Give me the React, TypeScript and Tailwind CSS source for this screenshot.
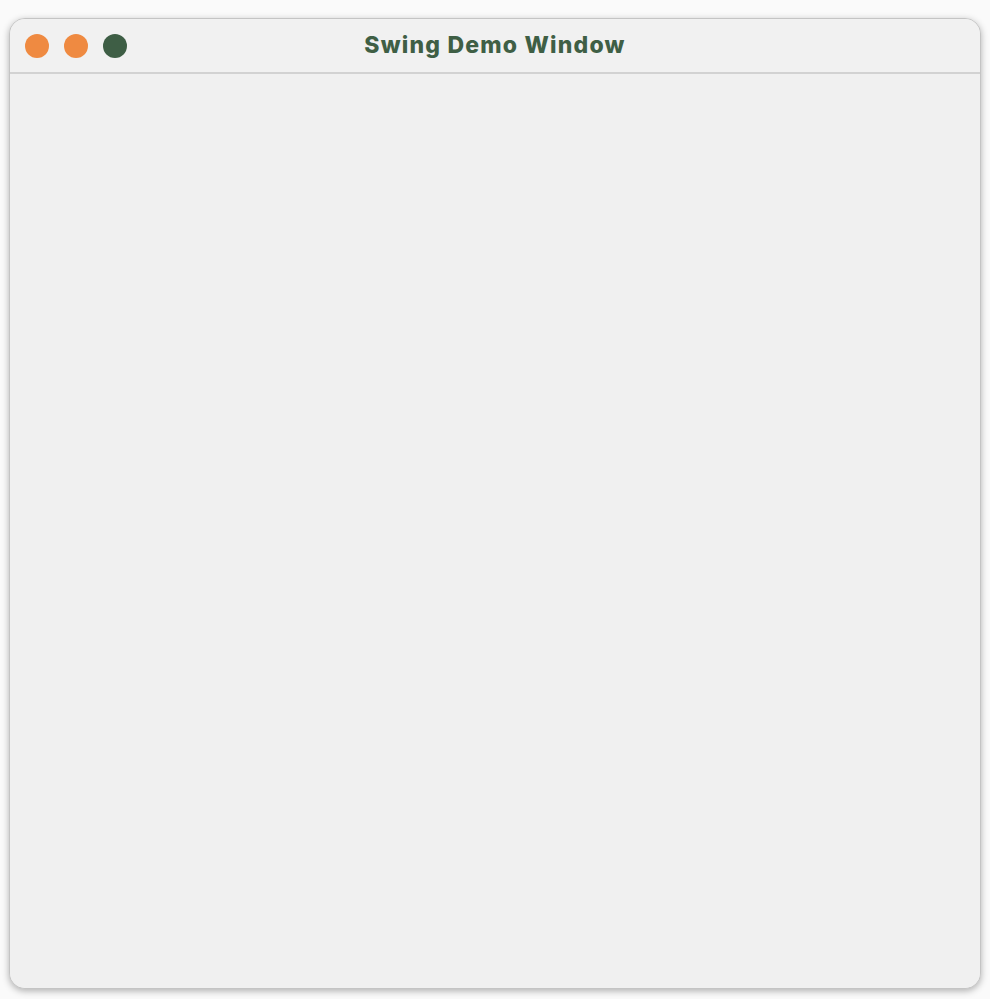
export default function App() {
  return (
    <div className="w-[990px] h-[999px] bg-[#fafafa] pt-[18px] pl-[9px] font-['Inter','Liberation_Sans',sans-serif]">
      <div className="w-[972px] h-[971px] flex flex-col rounded-[16px] border border-[#c4c4c4] bg-[#f0f0f0] shadow-[0_2px_7px_rgba(0,0,0,0.3)] overflow-hidden">
        {/* title bar */}
        <div className="relative h-[55px] flex items-center border-b-2 border-[#d2d2d2] bg-[#f1f1f1]">
          <div className="flex items-center gap-[15px] pl-[15px]">
            <span className="w-[24px] h-[24px] rounded-full bg-[#ef8a41]" />
            <span className="w-[24px] h-[24px] rounded-full bg-[#ef8a41]" />
            <span className="w-[24px] h-[24px] rounded-full bg-[#3e5e45]" />
          </div>
          <div className="absolute inset-0 flex items-center justify-center text-[23px] font-extrabold text-[#3f5f45] tracking-[1.2px]">
            Swing Demo Window
          </div>
        </div>
        <div className="flex-1 bg-[#f0f0f0]" />
      </div>
    </div>
  );
}
